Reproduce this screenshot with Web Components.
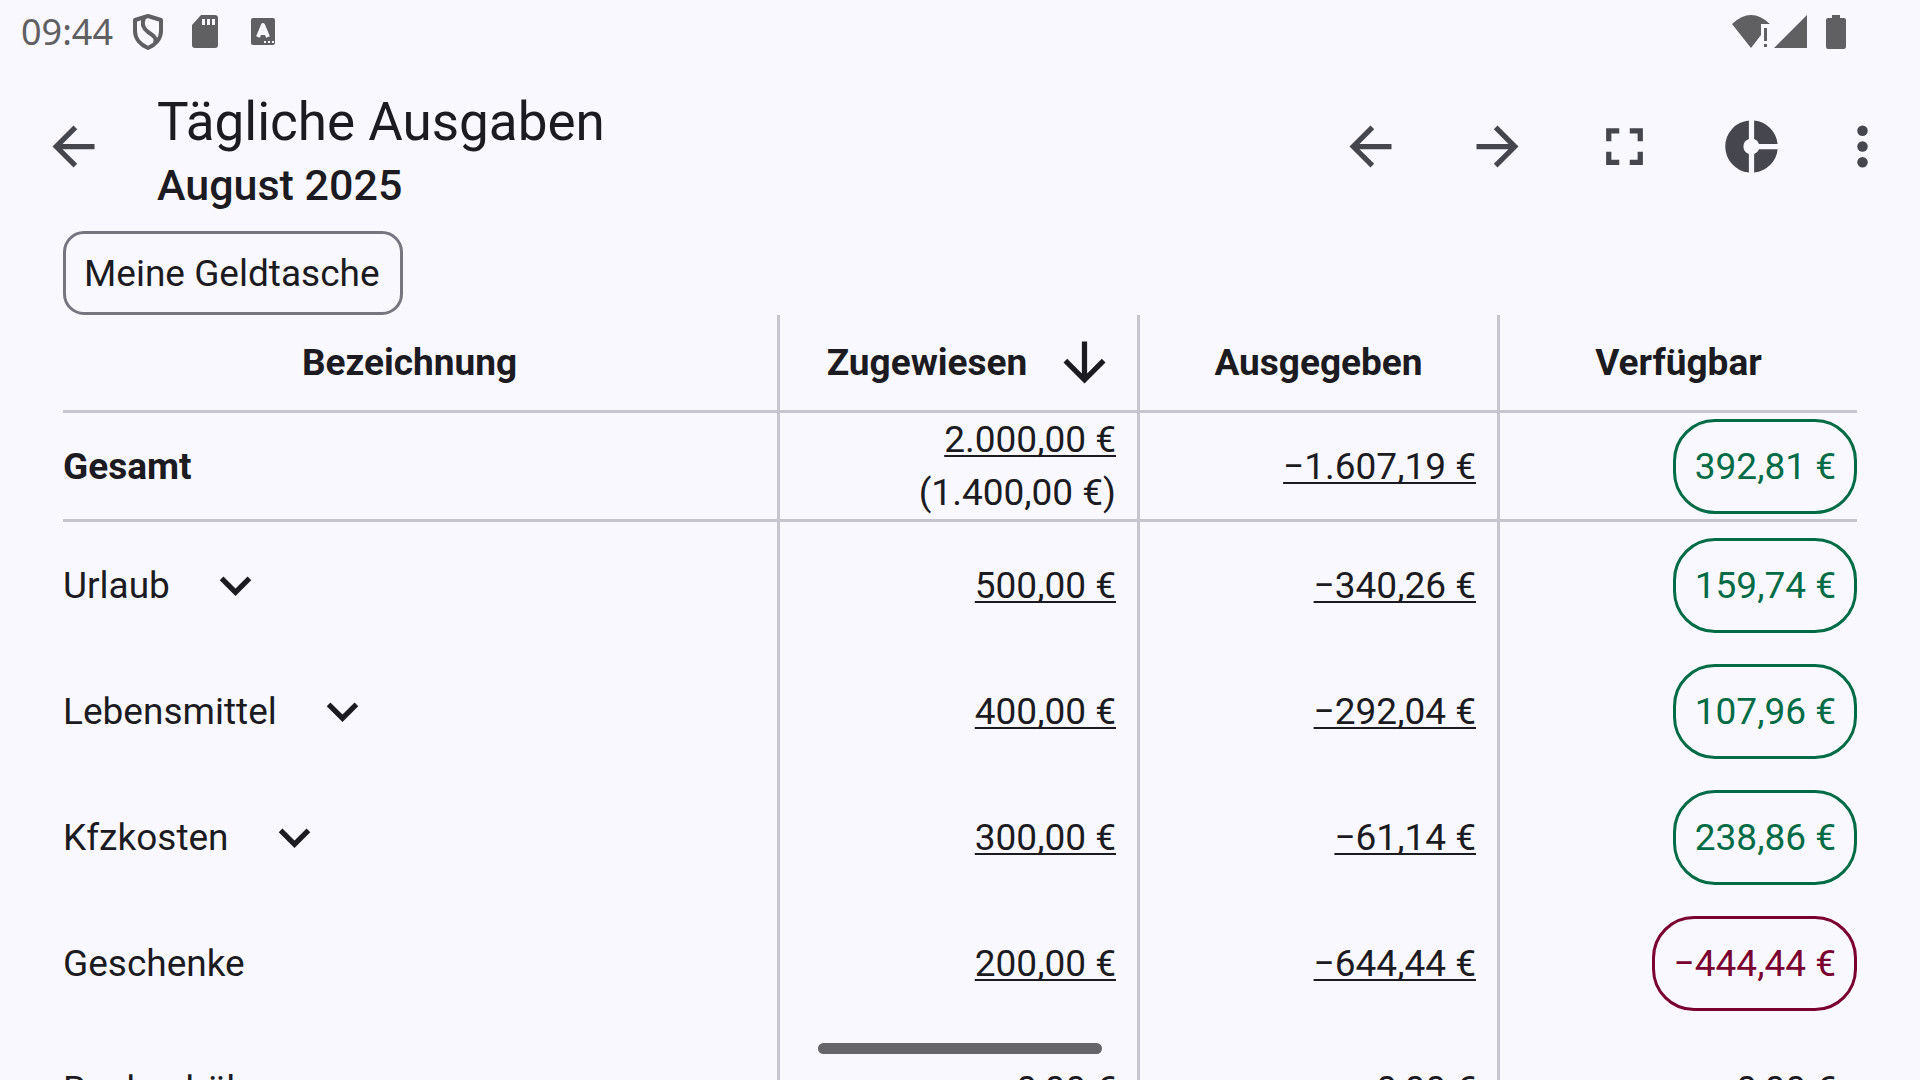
<!DOCTYPE html>
<html lang="de">
<head>
<meta charset="utf-8">
<meta name="viewport" content="width=device-width, initial-scale=1">
<title>Tägliche Ausgaben</title>
<style>
    body {
        margin: 0;
        background: #faf8ff;
        color: #1b1b21;
        font-family: Roboto, "Noto Sans", sans-serif;
        font-size: 37px;
        line-height: 53px;
    }
</style>
</head>
<body>
<budget-app></budget-app>

<script>
const ICONS = {
    back: '<path d="M20 11H7.83l5.59-5.59L12 4l-8 8 8 8 1.41-1.41L7.83 13H20z"/>',
    forward: '<path d="M12 4l-1.41 1.41L16.17 11H4v2h12.17l-5.58 5.59L12 20l8-8z"/>',
    down: '<path d="M20 12l-1.41-1.41L13 16.17V4h-2v12.17l-5.58-5.59L4 12l8 8z"/>',
    expand: '<path d="M16.59 8.59L12 13.17 7.41 8.59 6 10l6 6 6-6z"/>',
    fullscreen: '<path d="M7 14H5v5h5v-2H7zM5 10h2V7h3V5H5zM17 17h-3v2h5v-5h-2zM14 5v2h3v3h2V5z"/>',
    donut: '<path d="M11 9.15V2.05a10 10 0 0 0 0 19.9v-7.1a3 3 0 0 1 0-5.7zM14.86 11H21.95A10 10 0 0 0 13 2.05v7.1A3 3 0 0 1 14.86 11zM13 14.85v7.1A10 10 0 0 0 21.95 13H14.86A3 3 0 0 1 13 14.85z"/>',
    more: '<circle cx="12" cy="6" r="2"/><circle cx="12" cy="12" r="2"/><circle cx="12" cy="18" r="2"/>'
};

class MdIcon extends HTMLElement {
    constructor() {
        super();
        this.attachShadow({ mode: 'open' });
    }

    connectedCallback() {
        this.shadowRoot.innerHTML = `
            <style>
                :host { display: block; flex: none; width: 63px; height: 63px; }
                svg { display: block; width: 100%; height: 100%; fill: currentColor; }
            </style>
            <svg viewBox="0 0 24 24" aria-hidden="true">${ICONS[this.getAttribute('name')]}</svg>
        `;
    }
}

class IconButton extends HTMLElement {
    constructor() {
        super();
        this.attachShadow({ mode: 'open' });
    }

    connectedCallback() {
        this.shadowRoot.innerHTML = `
            <style>
                :host { display: block; flex: none; width: 126px; }
                button {
                    display: flex;
                    justify-content: center;
                    width: 100%;
                    padding: 0;
                    border: 0;
                    background: none;
                    color: inherit;
                    cursor: pointer;
                }
            </style>
            <button type="button" aria-label="${this.getAttribute('label')}">
                <md-icon name="${this.getAttribute('icon')}"></md-icon>
            </button>
        `;
    }
}

class StatusBar extends HTMLElement {
    constructor() {
        super();
        const shadow = this.attachShadow({ mode: 'open' });
        shadow.innerHTML = `
            <style>
                :host {
                    display: flex;
                    flex: none;
                    align-items: center;
                    justify-content: space-between;
                    height: 63px;
                    padding: 0 74px 0 21px;
                    box-sizing: border-box;
                    color: #606063;
                    font-family: "Noto Sans", sans-serif;
                    font-size: 36px;
                }
                div { display: flex; align-items: center; }
                svg { display: block; fill: currentColor; }
                .left { gap: 20px; }
                .notes { gap: 28px; }
                .right { gap: 4px; }
                .battery { margin-left: 15px; }
            </style>
            <div class="left">
                <span>09:44</span>
                <div class="notes">
                    <svg width="30" height="36" viewBox="0 0 30 36">
                        <path d="M15 2L28 6V17C28 25 22 31 15 34C8 31 2 25 2 17V6Z" fill="none" stroke="currentColor" stroke-width="4" stroke-linejoin="round"/>
                        <path d="M11 4C8 10 10 14 15 18C21 22 24 24 22 29" fill="none" stroke="currentColor" stroke-width="4"/>
                    </svg>
                    <svg width="28" height="34" viewBox="0 0 28 34">
                        <path fill-rule="evenodd" d="M10 0H24Q27 0 27 3V30Q27 33 24 33H4Q1 33 1 30V10ZM11 4V10H14V4ZM16 4V10H19V4ZM21 4V10H24V4Z"/>
                    </svg>
                    <svg width="32" height="34" viewBox="0 0 32 34">
                        <path fill-rule="evenodd" d="M6 3H26Q28 3 28 5V28Q28 30 26 30H6Q4 30 4 28V5Q4 3 6 3ZM17 26V28H19V26ZM21 26V28H23V26ZM25 26V28H27V26Z"/>
                        <path d="M11 22L16 10L21 22M13 18H19" fill="none" stroke="#faf8ff" stroke-width="4" stroke-linejoin="round"/>
                    </svg>
                </div>
            </div>
            <div class="right">
                <svg width="38" height="34" viewBox="0 0 38 34">
                    <path d="M0 9Q19 -9 38 9H29V20L19 33Z"/>
                    <path d="M32 13H35V26H32ZM32 29H35V32H32Z"/>
                </svg>
                <svg width="33" height="34" viewBox="0 0 33 34"><path d="M33 0V33H0Z"/></svg>
                <svg class="battery" width="20" height="34" viewBox="0 0 20 34">
                    <path d="M6 0H14V3H18Q20 3 20 5V31Q20 34 18 34H2Q0 34 0 31V5Q0 3 2 3H6Z"/>
                </svg>
            </div>
        `;
    }
}

class AppBar extends HTMLElement {
    constructor() {
        super();
        const shadow = this.attachShadow({ mode: 'open' });
        shadow.innerHTML = `
            <style>
                :host {
                    display: flex;
                    flex: none;
                    align-items: center;
                    height: 168px;
                    padding: 0 10px 2px;
                    box-sizing: border-box;
                }
                icon-button { color: #46464f; }
                .titles { flex: 1; padding: 8px 0 0 21px; }
                .actions { display: flex; gap: 1px; }
                .overflow { width: 95px; }
            </style>
            <icon-button icon="back" label="Zurück"></icon-button>
            <div class="titles"><slot></slot></div>
            <div class="actions">
                <icon-button icon="back" label="Vorheriger Monat"></icon-button>
                <icon-button icon="forward" label="Nächster Monat"></icon-button>
                <icon-button icon="fullscreen" label="Vollbild"></icon-button>
                <icon-button icon="donut" label="Diagramm"></icon-button>
                <icon-button class="overflow" icon="more" label="Weitere Optionen"></icon-button>
            </div>
        `;
    }
}

class FilterChip extends HTMLElement {
    constructor() {
        super();
        const shadow = this.attachShadow({ mode: 'open' });
        shadow.innerHTML = `
            <style>
                :host { display: block; }
                button {
                    display: block;
                    height: 84px;
                    padding: 0 20px 0 18px;
                    border: 3px solid #777680;
                    border-radius: 21px;
                    background: none;
                    color: inherit;
                    font: inherit;
                    cursor: pointer;
                }
            </style>
            <button type="button"><slot></slot></button>
        `;
    }
}

class AmountPill extends HTMLElement {
    constructor() {
        super();
        const shadow = this.attachShadow({ mode: 'open' });
        shadow.innerHTML = `
            <style>
                :host {
                    display: inline-block;
                    padding: 18px 18px 18px 19px;
                    border: 3px solid currentColor;
                    border-radius: 42px;
                    color: #006c45;
                    vertical-align: middle;
                }
                :host([negative]) { color: #7a0030; }
                :host([plain]) { border-color: transparent; color: inherit; }
            </style>
            <slot></slot>
        `;
    }
}

class BudgetTable extends HTMLElement {
    constructor() {
        super();
        this.attachShadow({ mode: 'open' });

        this.rows = [
            { name: 'Urlaub', budget: '500,00 €', spent: '−340,26 €', left: '159,74 €', group: true },
            { name: 'Lebensmittel', budget: '400,00 €', spent: '−292,04 €', left: '107,96 €', group: true },
            { name: 'Kfzkosten', budget: '300,00 €', spent: '−61,14 €', left: '238,86 €', group: true },
            { name: 'Geschenke', budget: '200,00 €', spent: '−644,44 €', left: '−444,44 €', state: 'negative' },
            { name: 'Bankgebühren', budget: '0,00 €', spent: '0,00 €', left: '0,00 €', state: 'plain' }
        ];
        this.render();
    }

    renderRow(row) {
        const toggle = row.group
            ? `<icon-button icon="expand" label="${row.name} aufklappen"></icon-button>`
            : '';
        return `
            <tr>
                <th scope="row"><div class="name">${row.name}${toggle}</div></th>
                <td><a href="#">${row.budget}</a></td>
                <td><a href="#">${row.spent}</a></td>
                <td><amount-pill ${row.state || ''}>${row.left}</amount-pill></td>
            </tr>
        `;
    }

    render() {
        this.shadowRoot.innerHTML = `
            <style>
                :host { display: block; padding: 0 63px; }
                table {
                    width: 100%;
                    table-layout: fixed;
                    border-spacing: 0;
                }
                .amount { width: 360px; }
                .last { width: 357px; }
                th, td {
                    box-sizing: border-box;
                    height: 126px;
                    padding: 0 21px 0 0;
                    border-right: 3px solid #c7c5d0;
                    font-weight: 400;
                    text-align: right;
                    white-space: nowrap;
                }
                th:last-child, td:last-child { padding-right: 0; border-right: 0; }
                thead th {
                    height: 98px;
                    border-bottom: 3px solid #c7c5d0;
                    font-weight: 700;
                    text-align: center;
                }
                thead th:nth-child(n + 2) { padding: 0 21px; }
                tbody th { text-align: left; }
                .total th, .total td { height: 109px; border-bottom: 3px solid #c7c5d0; }
                .total th { font-weight: 700; }
                .name { display: flex; align-items: center; gap: 3px; }
                .sort {
                    display: flex;
                    align-items: center;
                    width: 100%;
                    padding: 0;
                    border: 0;
                    background: none;
                    color: inherit;
                    font: inherit;
                    cursor: pointer;
                }
                .sort span { flex: 1; }
                a { color: inherit; text-decoration-thickness: 2px; text-underline-offset: 3px; text-decoration-skip-ink: none; }
            </style>
            <table>
                <colgroup>
                    <col><col class="amount"><col class="amount"><col class="last">
                </colgroup>
                <thead>
                    <tr>
                        <th scope="col">Bezeichnung</th>
                        <th scope="col">
                            <button class="sort" type="button"><span>Zugewiesen</span><md-icon name="down"></md-icon></button>
                        </th>
                        <th scope="col">Ausgegeben</th>
                        <th scope="col">Verfügbar</th>
                    </tr>
                </thead>
                <tbody>
                    <tr class="total">
                        <th scope="row">Gesamt</th>
                        <td><a href="#">2.000,00 €</a><br>(1.400,00 €)</td>
                        <td><a href="#">−1.607,19 €</a></td>
                        <td><amount-pill>392,81 €</amount-pill></td>
                    </tr>
                    ${this.rows.map((row) => this.renderRow(row)).join('')}
                </tbody>
            </table>
        `;
    }
}

class BudgetApp extends HTMLElement {
    constructor() {
        super();
        const shadow = this.attachShadow({ mode: 'open' });
        shadow.innerHTML = `
            <style>
                :host { display: flex; flex-direction: column; height: 100vh; overflow: hidden; }
                h1 { margin: 0; font-size: 53px; line-height: 70px; font-weight: 400; }
                h2 { margin: 0; font-size: 43px; line-height: 57px; font-weight: 500; }
                .filter { padding: 0 63px; }
                main { flex: 1; min-height: 0; overflow-y: auto; scrollbar-width: none; }
                .handle {
                    position: fixed;
                    bottom: 26px;
                    left: 50%;
                    width: 284px;
                    height: 11px;
                    margin-left: -142px;
                    border-radius: 6px;
                    background: #656468;
                }
            </style>
            <status-bar></status-bar>
            <app-bar>
                <h1>Tägliche Ausgaben</h1>
                <h2>August 2025</h2>
            </app-bar>
            <main>
                <div class="filter"><filter-chip>Meine Geldtasche</filter-chip></div>
                <budget-table></budget-table>
            </main>
            <div class="handle"></div>
        `;
    }
}

customElements.define('md-icon', MdIcon);
customElements.define('icon-button', IconButton);
customElements.define('status-bar', StatusBar);
customElements.define('app-bar', AppBar);
customElements.define('filter-chip', FilterChip);
customElements.define('amount-pill', AmountPill);
customElements.define('budget-table', BudgetTable);
customElements.define('budget-app', BudgetApp);
</script>
</body>
</html>
